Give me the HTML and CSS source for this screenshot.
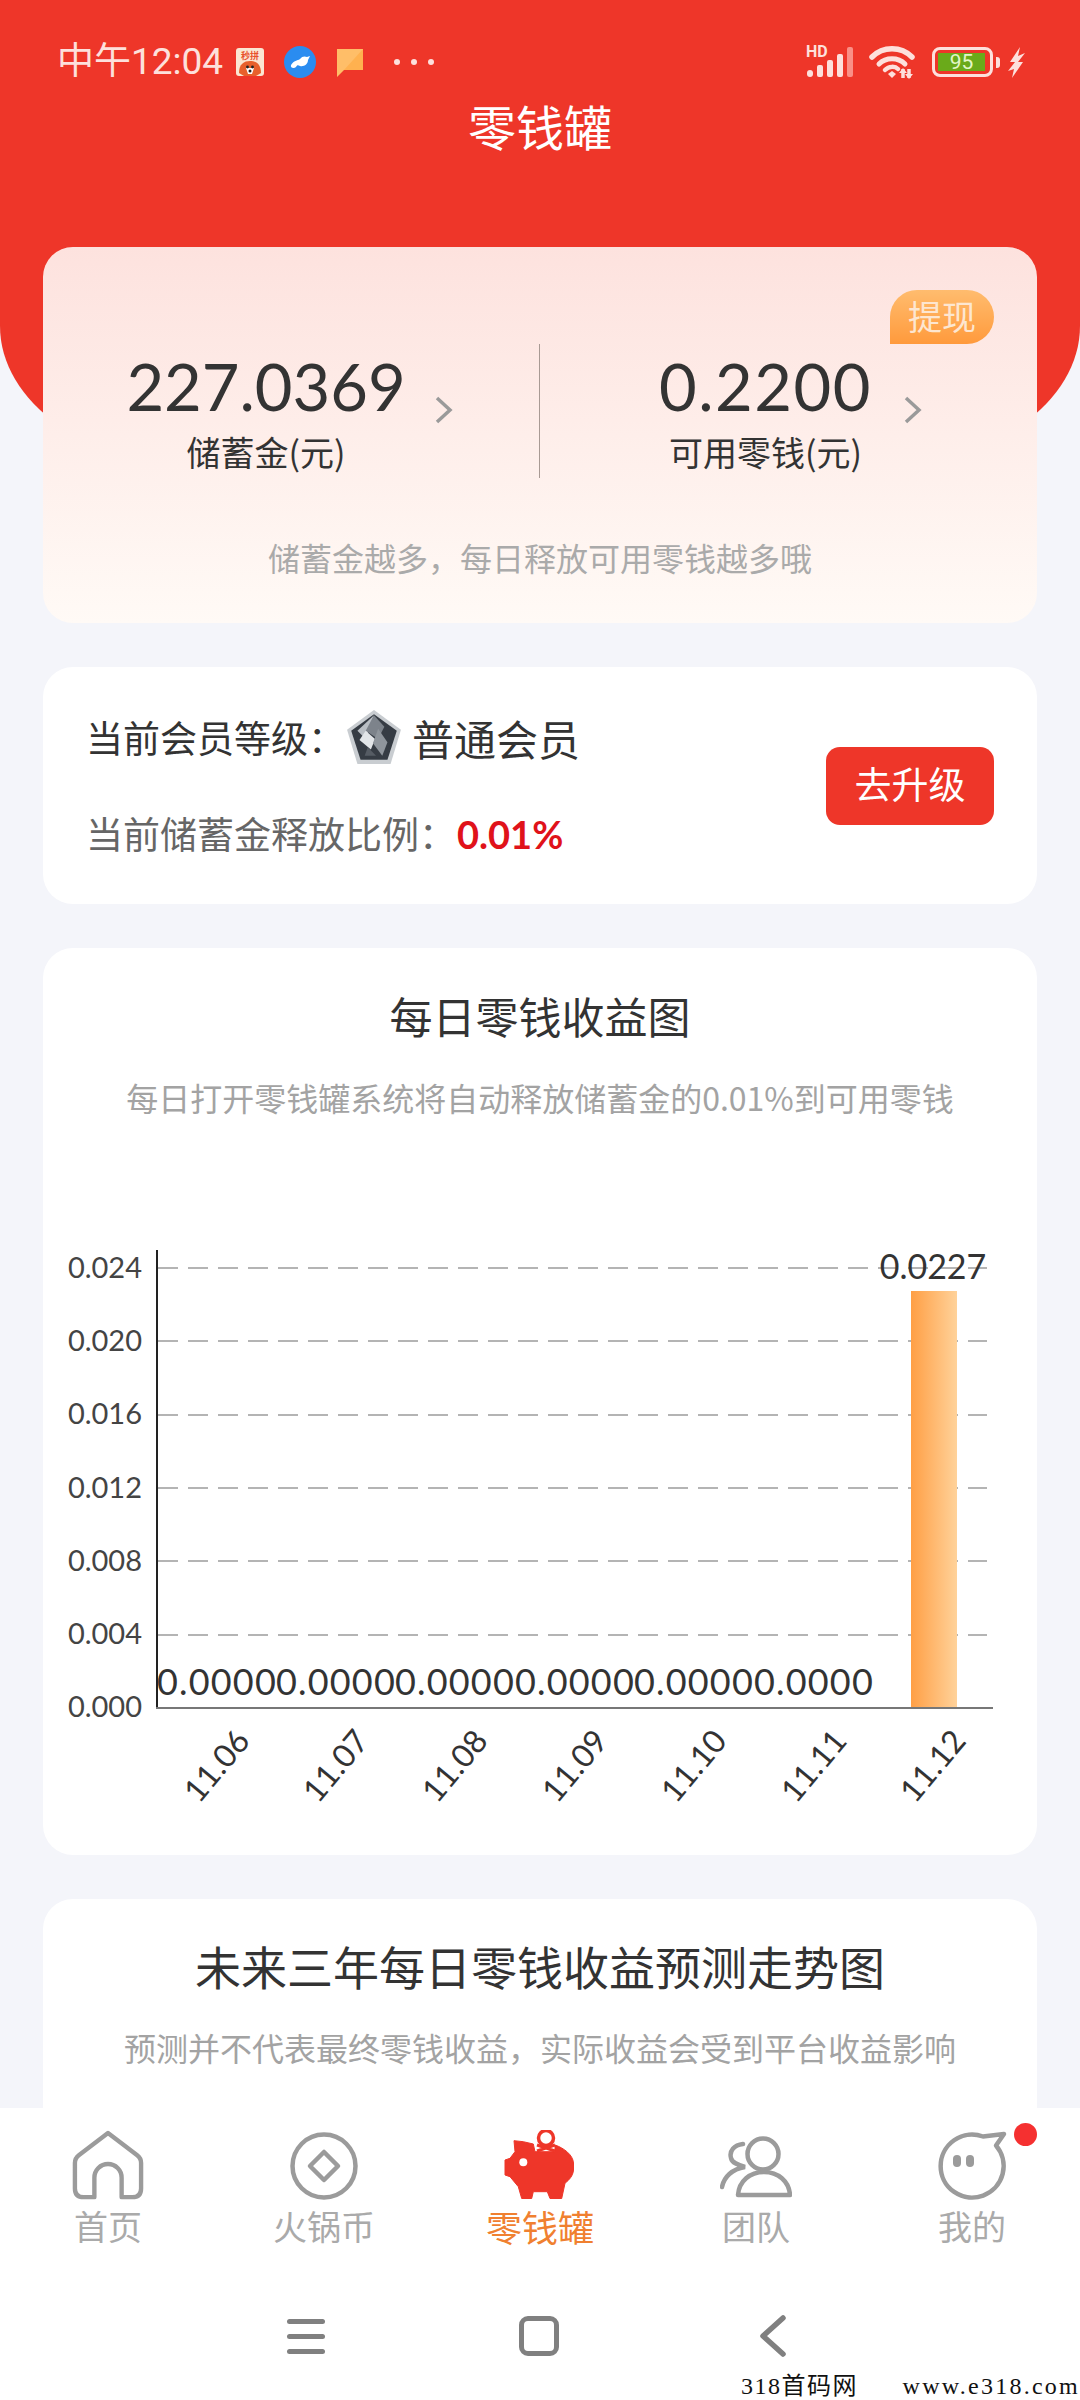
FILE: index.html
```html
<!DOCTYPE html>
<html lang="zh-CN">
<head>
    <meta charset="UTF-8">
    <meta name="viewport" content="width=device-width, initial-scale=1.0">
    <title>零钱罐</title>
    <link rel="stylesheet" href="styles.css">
</head>
<body>

<header class="top">
    <div class="status-bar">
        <div class="status-left">
            <span class="status-time">中午12:04</span>
            <svg class="app-icon" width="28" height="28" viewBox="0 0 28 28">
                <rect width="28" height="28" rx="3" fill="#fbe6d2"/>
                <text class="app-icon-text" x="14" y="11">秒拼</text>
                <path d="M3 25C3 16 8 13 14 13S25 16 25 25L20 28H8Z" fill="#e8602c"/>
                <path d="M10 20H18L16 26H12Z" fill="#fff"/>
                <circle cx="11.5" cy="19" r="1.4" fill="#222"/>
                <circle cx="16.5" cy="19" r="1.4" fill="#222"/>
                <circle cx="14" cy="23" r="1.5" fill="#222"/>
            </svg>
            <svg class="app-bird" width="32" height="32" viewBox="0 0 32 32">
                <circle cx="16" cy="16" r="16" fill="#2a8cf0"/>
                <path d="M7 19C10 14 13 15 16 13C18 10 21 10 23 11L26 10L24 14C24 18 20 21 16 20C14 19 13 19 12 21C10 23 6 22 7 19Z" fill="#fff"/>
            </svg>
            <svg class="app-note" width="26" height="29" viewBox="0 0 26 29">
                <path d="M0 1H26V22H7L0 29Z" fill="#ffbe68"/>
                <path d="M26 1V22H7Z" fill="#ffb14f"/>
            </svg>
            <div class="status-dots"><i></i><i></i><i></i></div>
        </div>
        <div class="status-right">
            <div class="signal">
                <span class="hd-text">HD</span>
                <svg width="48" height="32" viewBox="0 0 48 32">
                    <rect x="1" y="24" width="6" height="7" rx="3" fill="#fde0dc"/>
                    <rect x="11" y="19" width="6" height="12" rx="2" fill="#fde0dc"/>
                    <rect x="21" y="14" width="6" height="17" rx="2" fill="#fde0dc"/>
                    <rect x="31" y="8" width="6" height="23" rx="2" fill="#fde0dc"/>
                    <rect x="41" y="1" width="6" height="30" rx="2" fill="#fa8f86"/>
                </svg>
            </div>
            <svg width="48" height="34" viewBox="0 0 48 34" class="wifi">
                <path d="M3 12C14 1 32 1 43 12" fill="none" stroke="#fde0dc" stroke-width="5.5" stroke-linecap="round"/>
                <path d="M10 19C17 12 29 12 36 19" fill="none" stroke="#fde0dc" stroke-width="5" stroke-linecap="round"/>
                <path d="M16 25C20 21 26 21 29 24" fill="none" stroke="#fde0dc" stroke-width="4.5" stroke-linecap="round"/>
                <path d="M19 29L23 26L27 29L23 33Z" fill="#fde0dc"/>
                <path d="M34 24V33M40 24V33" stroke="#fde0dc" stroke-width="3.5"/>
                <path d="M30 28L34 23L38 28M36 29L40 34L44 29" fill="#fde0dc"/>
            </svg>
            <div class="battery">
                <div class="battery-body"><span>95</span></div>
                <i class="battery-nub"></i>
            </div>
            <svg width="17" height="31" viewBox="0 0 17 31" class="bolt">
                <path d="M12 0L2 15H7L0 24L6 22L4 31L15 15H10L17 6L10 9Z" fill="#fde0dc"/>
            </svg>
        </div>
    </div>
    <h1 class="page-title">零钱罐</h1>
</header>

<main class="content">
    <section class="card balance">
        <div class="withdraw">提现</div>
        <div class="balance-row">
            <div class="balance-col balance-col-left">
                <div class="balance-num">227.0369</div>
                <div class="balance-label">储蓄金(元)</div>
                <svg class="chevron" width="20" height="28" viewBox="0 0 20 28"><path d="M3 2L16 14L3 26" fill="none" stroke="#9a9a9a" stroke-width="3.5"/></svg>
            </div>
            <div class="balance-col balance-col-right">
                <div class="balance-num">0.2200</div>
                <div class="balance-label">可用零钱(元)</div>
                <svg class="chevron" width="20" height="28" viewBox="0 0 20 28"><path d="M3 2L16 14L3 26" fill="none" stroke="#9a9a9a" stroke-width="3.5"/></svg>
            </div>
        </div>
        <p class="balance-note">储蓄金越多，每日释放可用零钱越多哦</p>
    </section>

    <section class="card level">
        <div class="level-info">
            <div class="level-line">
                <span>当前会员等级：</span>
                <svg class="badge" width="58" height="58" viewBox="0 0 56 56">
                    <path d="M28 2L54 21L44 54H12L2 21Z" fill="#c9cdd1"/>
                    <path d="M28 6L50 22L41 50H15L6 22Z" fill="#363c44"/>
                    <path d="M28 7L12 22L20 30Z" fill="#b9bec4"/>
                    <path d="M28 7L38 18L32 30L20 22Z" fill="#7d838b"/>
                    <path d="M20 22L29 30L25 40L14 31Z" fill="#e2e5e8"/>
                    <path d="M32 20L41 33L36 46L27 34Z" fill="#8f959c"/>
                    <path d="M22 38L30 46H19Z" fill="#565c64"/>
                </svg>
                <span class="level-name">普通会员</span>
            </div>
            <div class="ratio-line">当前储蓄金释放比例：<b>0.01%</b></div>
        </div>
        <button class="upgrade">去升级</button>
    </section>

    <section class="card daily">
        <h2 class="card-title">每日零钱收益图</h2>
        <p class="card-sub">每日打开零钱罐系统将自动释放储蓄金的0.01%到可用零钱</p>
        <svg class="chart" width="994" height="640" viewBox="43 1220 994 640">
            <defs>
                <linearGradient id="bar" x1="0" y1="0" x2="1" y2="0">
                    <stop offset="0" stop-color="#ff9f45"/>
                    <stop offset="1" stop-color="#ffd29a"/>
                </linearGradient>
            </defs>
            <g class="grid">
                <line x1="158" x2="987" y1="1268" y2="1268"/>
                <line x1="158" x2="987" y1="1341" y2="1341"/>
                <line x1="158" x2="987" y1="1415" y2="1415"/>
                <line x1="158" x2="987" y1="1488" y2="1488"/>
                <line x1="158" x2="987" y1="1561" y2="1561"/>
                <line x1="158" x2="987" y1="1635" y2="1635"/>
            </g>
            <line class="axis-y" x1="157" x2="157" y1="1250" y2="1709"/>
            <line class="axis-x" x1="156" x2="993" y1="1708" y2="1708"/>
            <rect x="911" y="1291" width="46" height="416" fill="url(#bar)"/>
            <g class="y-labels">
                <text x="142" y="1278">0.024</text>
                <text x="142" y="1351">0.020</text>
                <text x="142" y="1424">0.016</text>
                <text x="142" y="1498">0.012</text>
                <text x="142" y="1571">0.008</text>
                <text x="142" y="1644">0.004</text>
                <text x="142" y="1717">0.000</text>
            </g>
            <g class="bar-labels">
                <text x="217" y="1695">0.0000</text>
                <text x="336" y="1695">0.0000</text>
                <text x="455" y="1695">0.0000</text>
                <text x="575" y="1695">0.0000</text>
                <text x="694" y="1695">0.0000</text>
                <text x="814" y="1695">0.0000</text>
                <text class="bar-top" x="933" y="1279">0.0227</text>
            </g>
            <g class="x-labels">
                <text transform="translate(219 1768) rotate(-50)">11.06</text>
                <text transform="translate(338 1768) rotate(-50)">11.07</text>
                <text transform="translate(457 1768) rotate(-50)">11.08</text>
                <text transform="translate(577 1768) rotate(-50)">11.09</text>
                <text transform="translate(696 1768) rotate(-50)">11.10</text>
                <text transform="translate(816 1768) rotate(-50)">11.11</text>
                <text transform="translate(935 1768) rotate(-50)">11.12</text>
            </g>
        </svg>
    </section>

    <section class="card forecast">
        <h2 class="card-title card-title-big">未来三年每日零钱收益预测走势图</h2>
        <p class="card-sub">预测并不代表最终零钱收益，实际收益会受到平台收益影响</p>
    </section>
</main>

<div class="bottom">
    <nav class="tabbar">
        <div class="tab">
            <svg width="72" height="72" viewBox="-1 0 74 74"><path d="M36 3L66 26Q70 29 70 34V60Q70 69 61 69H50V49A14 14 0 0 0 22 49V69H11Q2 69 2 60V34Q2 29 6 26Z" fill="none" stroke="#9b9b9b" stroke-width="4.5" stroke-linejoin="round"/></svg>
            <span>首页</span>
        </div>
        <div class="tab">
            <svg width="72" height="72" viewBox="0 0 72 72"><circle cx="36" cy="36" r="31.5" fill="none" stroke="#9b9b9b" stroke-width="4.5"/><path d="M36 22L50 36L36 50L22 36Z" fill="none" stroke="#9b9b9b" stroke-width="4.5" stroke-linejoin="round"/></svg>
            <span>火锅币</span>
        </div>
        <div class="tab tab-active">
            <svg width="72" height="72" viewBox="0 0 72 72">
                <path d="M10 10.7L19.3 11.7L29.3 14L31 21.7H51V15C60 18 69 25 69.5 33V40C69 46 65 50 61 53.3L57.7 68.5H46L43.3 61.7H29.3L27.7 68.5H17.7L14.3 56.7L6 46.7L1 45V30L6 28.3L11 21.7Z" fill="#ee3629" stroke="#ee3629" stroke-width="1" stroke-linejoin="round"/>
                <circle cx="42" cy="8" r="7.5" fill="none" stroke="#ee3629" stroke-width="3.5"/>
                <path d="M33 15L51 21M51 15L33 21" stroke="#ee3629" stroke-width="3"/>
                <circle cx="19.3" cy="32.3" r="4" fill="#fff"/>
            </svg>
            <span>零钱罐</span>
        </div>
        <div class="tab">
            <svg width="72" height="72" viewBox="0 0 72 72">
                <circle cx="43" cy="24" r="15.5" fill="none" stroke="#9b9b9b" stroke-width="4.5"/>
                <path d="M18 65C19 51 30 42 44 42S69 51 70 65Z" fill="none" stroke="#9b9b9b" stroke-width="4.5" stroke-linejoin="round"/>
                <path d="M23 14C14 15 9 21 11 28C12 33 18 35 25 37C12 39 4 47 2 57" fill="none" stroke="#9b9b9b" stroke-width="4.5" stroke-linecap="round"/>
            </svg>
            <span>团队</span>
        </div>
        <div class="tab">
            <svg width="72" height="72" viewBox="0 0 72 72">
                <path d="M47 6.5L68 4L60 15.5A31.5 31.5 0 1 1 47 6.5Z" fill="none" stroke="#9b9b9b" stroke-width="4.5" stroke-linejoin="round"/>
                <rect x="17" y="25" width="8" height="12" rx="4" fill="#9b9b9b"/>
                <rect x="30" y="25" width="8" height="12" rx="4" fill="#9b9b9b"/>
            </svg>
            <span>我的</span>
            <i class="tab-dot"></i>
        </div>
    </nav>
    <div class="navbar">
        <div class="nav-menu"><i></i><i></i><i></i></div>
        <div class="nav-home"></div>
        <svg class="nav-back" width="28" height="42" viewBox="0 0 28 42"><path d="M24 3L4 21L24 39" fill="none" stroke="#808080" stroke-width="5.5" stroke-linecap="round" stroke-linejoin="round"/></svg>
    </div>
    <div class="watermark"><span class="watermark-name">318首码网</span><span>www.e318.com</span></div>
</div>

</body>
</html>
```

FILE: styles.css
```css
* {
    box-sizing: border-box;
}

body {
    font-family: "Noto Sans CJK SC", "Noto Sans", sans-serif;
    margin: 0;
    padding: 0;
    width: 1080px;
    height: 2400px;
    overflow: hidden;
    position: relative;
    background: #f4f5fa;
    color: #333;
}

/* red header with curved bottom */
.top {
    height: 466px;
    background: #ee3629;
    border-radius: 0 0 200px 200px / 0 0 140px 140px;
    padding-top: 42px;
}
.status-bar {
    display: flex;
    justify-content: space-between;
    align-items: center;
    height: 40px;
    padding: 0 55px 0 57px;
}
.status-left {
    display: flex;
    align-items: center;
}
.status-right {
    display: flex;
    align-items: center;
}
.status-time {
    font-family: Roboto, "Noto Sans CJK SC", sans-serif;
    font-size: 37px;
    line-height: 44px;
    color: #fde0dc;
    width: 179px;
    white-space: nowrap;
}
.app-icon-text {
    font-size: 9px;
    font-weight: 700;
    fill: #e8502a;
    text-anchor: middle;
}
.app-bird {
    margin-left: 20px;
}
.app-note {
    margin-left: 21px;
}
.status-dots {
    display: flex;
    gap: 11px;
    margin-left: 31px;
}
.status-dots i {
    width: 6px;
    height: 6px;
    border-radius: 50%;
    background: #fde0dc;
}
.signal {
    position: relative;
    height: 32px;
    margin-right: 15px;
}
.signal svg {
    display: block;
}
.hd-text {
    position: absolute;
    top: -1px;
    left: 0;
    font-family: Roboto, sans-serif;
    font-size: 16px;
    line-height: 14px;
    font-weight: 700;
    color: #fde0dc;
}
.wifi {
    margin-right: 15px;
}
.battery {
    display: flex;
    align-items: center;
    gap: 3px;
    margin-right: 8px;
}
.battery-body {
    width: 61px;
    height: 30px;
    border: 3px solid #fde0dc;
    border-radius: 8px;
    padding: 3px;
}
.battery-body span {
    display: block;
    width: 47px;
    height: 18px;
    background: #6aaa1a;
    color: #e4f6c8;
    font-family: Roboto, sans-serif;
    font-size: 21px;
    line-height: 18px;
    text-align: center;
}
.battery-nub {
    width: 4px;
    height: 11px;
    border-radius: 0 3px 3px 0;
    background: #fde0dc;
}
.page-title {
    margin: 13px 0 0;
    font-size: 48px;
    line-height: 60px;
    font-weight: 400;
    color: #fff;
    text-align: center;
}

.content {
    margin-top: -219px;
    padding: 0 43px;
    display: flex;
    flex-direction: column;
    gap: 44px;
}
.card {
    width: 994px;
    background: #fff;
    border-radius: 30px;
    flex-shrink: 0;
}

/* balance card */
.balance {
    height: 376px;
    position: relative;
    padding-top: 97px;
    background: linear-gradient(180deg, #fde2de 0%, #fffaf6 100%);
}
.withdraw {
    position: absolute;
    top: 43px;
    right: 43px;
    width: 104px;
    height: 54px;
    border-radius: 27px 27px 27px 0;
    background: linear-gradient(180deg, #ffbc6e, #ff9a3c);
    color: #fde6d0;
    font-size: 34px;
    line-height: 52px;
    text-align: center;
}
.balance-row {
    display: flex;
    height: 134px;
}
.balance-col {
    width: 497px;
    height: 134px;
    position: relative;
    text-align: center;
    padding-top: 5px;
}
.balance-col-left {
    border-right: 1px solid #a89a94;
    padding-right: 50px;
}
.balance-col-right {
    padding-right: 46px;
}
.balance-num {
    font-family: Lato, sans-serif;
    font-size: 65px;
    line-height: 74px;
    color: #333;
}
.balance-col-right .balance-num {
    letter-spacing: 1.5px;
}
.balance-label {
    margin-top: 8px;
    font-size: 34px;
    line-height: 42px;
    color: #333;
}
.chevron {
    position: absolute;
    top: 52px;
}
.balance-col-left .chevron {
    left: 391px;
}
.balance-col-right .chevron {
    left: 363px;
}
.balance-note {
    margin: 57px 0 0;
    font-size: 32px;
    line-height: 44px;
    color: #aaa;
    text-align: center;
}

/* member level card */
.level {
    height: 237px;
    display: flex;
    justify-content: space-between;
    align-items: center;
    padding: 0 43px;
}
.level-info {
    margin-bottom: 6px;
}
.level-line {
    display: flex;
    align-items: center;
    height: 60px;
    font-size: 37px;
    color: #333;
    margin-top: -2px;
}
.level-line span:first-child {
    width: 259px;
    white-space: nowrap;
}
.badge {
    margin-right: 9px;
}
.level-name {
    font-size: 42px;
}
.ratio-line {
    margin-top: 44px;
    font-size: 37px;
    line-height: 44px;
    color: #666;
}
.ratio-line b {
    font-family: Lato, sans-serif;
    font-weight: 700;
    font-size: 38px;
    color: #e0121a;
    margin-left: 1px;
}
.upgrade {
    width: 168px;
    height: 78px;
    border: none;
    border-radius: 14px;
    background: #ee3629;
    color: #fff;
    font-family: inherit;
    font-size: 37px;
    padding: 0 0 5px;
}

/* chart cards */
.daily {
    height: 907px;
    padding-top: 37px;
}
.card-title {
    margin: 0;
    font-size: 43px;
    line-height: 60px;
    font-weight: 400;
    color: #333;
    text-align: center;
}
.card-title-big {
    font-size: 46px;
}
.card-sub {
    margin: 30px 0 0;
    font-size: 32px;
    line-height: 44px;
    color: #a3a3a3;
    text-align: center;
    white-space: nowrap;
}
.chart {
    display: block;
    margin-top: 101px;
}
.grid line {
    stroke: #b4b4b4;
    stroke-width: 2;
    stroke-dasharray: 20 10;
}
.axis-y {
    stroke: #222;
    stroke-width: 2;
}
.axis-x {
    stroke: #777;
    stroke-width: 2;
}
.y-labels text {
    font-family: Lato, sans-serif;
    font-size: 29px;
    fill: #444;
    text-anchor: end;
}
.bar-labels text {
    font-family: Lato, sans-serif;
    font-size: 36px;
    letter-spacing: 1.2px;
    fill: #333;
    text-anchor: middle;
}
.bar-labels .bar-top {
    font-size: 34px;
    letter-spacing: 0;
}
.x-labels text {
    font-family: Lato, sans-serif;
    font-size: 32px;
    fill: #333;
    text-anchor: middle;
    dominant-baseline: middle;
}
.forecast {
    height: 420px;
    padding-top: 36px;
}

/* bottom tab bar, sits over the scrolling cards */
.bottom {
    position: absolute;
    left: 0;
    right: 0;
    bottom: 0;
    height: 292px;
    background: #fff;
}
.tabbar {
    display: flex;
    padding-top: 22px;
}
.tab {
    width: 216px;
    position: relative;
    display: flex;
    flex-direction: column;
    align-items: center;
    color: #aaa;
    font-size: 34px;
    line-height: 40px;
}
.tab span {
    margin-top: 4px;
}
.tab-active {
    color: #f08030;
    font-size: 36px;
}
.tab-dot {
    position: absolute;
    top: -7px;
    left: 150px;
    width: 23px;
    height: 23px;
    border-radius: 50%;
    background: #f53030;
}
.navbar {
    display: flex;
    align-items: center;
    height: 42px;
    margin-top: 69px;
    padding-left: 287px;
}
.nav-menu {
    display: flex;
    flex-direction: column;
    gap: 10px;
    width: 38px;
}
.nav-menu i {
    height: 5px;
    border-radius: 3px;
    background: #808080;
}
.nav-home {
    width: 40px;
    height: 40px;
    border: 5px solid #808080;
    border-radius: 9px;
    margin-left: 194px;
}
.nav-back {
    margin-left: 200px;
}
.watermark {
    position: absolute;
    left: 741px;
    right: 0;
    bottom: 0;
    display: flex;
    justify-content: space-between;
    font-family: "Liberation Serif", "Noto Sans CJK SC", serif;
    font-size: 24px;
    line-height: 28px;
    letter-spacing: 2.25px;
    color: #111;
    white-space: nowrap;
}
.watermark-name {
    letter-spacing: 1.5px;
}
```
